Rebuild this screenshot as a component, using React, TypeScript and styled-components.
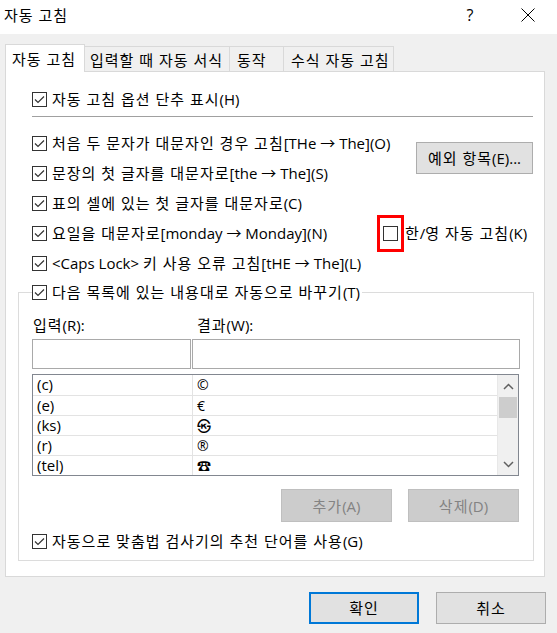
import React from "react";
import styled, { createGlobalStyle } from "styled-components";

const FONT = `"Open Sans", "Noto Sans CJK KR", "DejaVu Sans", sans-serif`;

const Global = createGlobalStyle`
  html, body { margin: 0; padding: 0; background: #f0f0f0; }
  body { font-family: ${FONT}; font-size: 15px; line-height: 20px; color: #000; }
  * { box-sizing: border-box; }
`;

const KoRun = styled.span`
  letter-spacing: 1px;
`;

const HANGUL = /([\u1100-\u11FF\u3130-\u318F\uAC00-\uD7AF][\u1100-\u11FF\u3130-\u318F\uAC00-\uD7AF ]*)/;

const T = ({ children }: { children: string }) => (
  <>
    {children.split(HANGUL).map((part, i) =>
      part === "" ? null : i % 2 === 1 ? <KoRun key={i}>{part}</KoRun> : <React.Fragment key={i}>{part}</React.Fragment>
    )}
  </>
);

const Window = styled.div`
  width: 557px;
  height: 633px;
  background: #f0f0f0;
  display: flex;
  flex-direction: column;
  overflow: hidden;
`;

const TitleBar = styled.div`
  height: 34px;
  flex-shrink: 0;
  background: #fff;
  display: flex;
  align-items: center;
  padding-left: 4px;
`;

const Title = styled.div`
  flex: 1;
  padding-bottom: 4px;
`;

const TitleButton = styled.div`
  width: 58px;
  height: 34px;
  display: flex;
  align-items: center;
  justify-content: center;
  padding-bottom: 4px;
  font-size: 16px;
`;

const Body = styled.div`
  padding-top: 10px;
  display: flex;
  flex-direction: column;
`;

const TabStrip = styled.div`
  display: flex;
  align-items: flex-end;
  height: 28px;
  margin: 0 0 -1px 5px;
  position: relative;
  z-index: 1;
`;

const Tab = styled.div<{ $active?: boolean; $w: number; $pad?: number }>`
  width: ${(p) => p.$w}px;
  height: ${(p) => (p.$active ? 28 : 26)}px;
  margin-left: ${(p) => (p.$active ? 0 : -1)}px;
  border: 1px solid #d9d9d9;
  border-bottom: ${(p) => (p.$active ? "none" : "1px solid #d9d9d9")};
  background: ${(p) => (p.$active ? "#fff" : "#f0f0f0")};
  display: flex;
  align-items: center;
  padding: ${(p) => (p.$active ? "0 0 0 6px" : `2px 0 0 ${p.$pad ?? 5}px`)};
  white-space: nowrap;
  position: relative;
  z-index: ${(p) => (p.$active ? 2 : 1)};
`;

const Panel = styled.div`
  margin: 0 12px 0 5px;
  background: #fff;
  border: 1px solid #d9d9d9;
  padding-top: 12px;
  display: flex;
  flex-direction: column;
`;

const CheckRow = styled.div<{ $indent?: number; $top?: number }>`
  display: flex;
  align-items: center;
  height: 30px;
  padding-left: ${(p) => p.$indent ?? 0}px;
  margin-top: ${(p) => p.$top ?? 0}px;
  white-space: nowrap;
`;

const Box = styled.span`
  width: 15px;
  height: 15px;
  flex-shrink: 0;
  border: 1px solid #333;
  background: #fff;
  display: flex;
  align-items: center;
  justify-content: center;
`;

const LabelText = styled.span<{ $gap?: number }>`
  margin-left: ${(p) => p.$gap ?? 5}px;
`;

const Separator = styled.div`
  height: 1px;
  background: #a0a0a0;
  margin: 2px 11px 11px 26px;
`;

const OptionsGrid = styled.div`
  display: grid;
  grid-template-columns: 345px 1fr;
  grid-auto-rows: 30px;
  padding: 0 11px 0 26px;
`;

const Cell = styled.div<{ $col: number; $row: string }>`
  grid-column: ${(p) => p.$col};
  grid-row: ${(p) => p.$row};
  display: flex;
  align-items: center;
  white-space: nowrap;
`;

const PushButton = styled.button<{ $w: number; $h: number; $default?: boolean; $disabled?: boolean }>`
  width: ${(p) => p.$w}px;
  height: ${(p) => p.$h}px;
  font-family: ${FONT};
  font-size: 15px;
  line-height: 20px;
  padding: 0;
  background: ${(p) => (p.$disabled ? "#cccccc" : "#e1e1e1")};
  color: ${(p) => (p.$disabled ? "#838383" : "#000")};
  border: ${(p) =>
    p.$default ? "2px solid #0078d7" : p.$disabled ? "1px solid #bfbfbf" : "1px solid #adadad"};
  display: flex;
  align-items: center;
  justify-content: center;
  white-space: nowrap;
`;

const ExceptionCell = styled.div`
  grid-column: 2;
  grid-row: 1 / 3;
  justify-self: end;
  align-self: center;
`;

const Highlight = styled.span`
  border: 3px solid #ff0000;
  padding: 8px 3px;
  margin: -5px 0;
  display: flex;
`;

const GroupBox = styled.fieldset`
  margin: 0 10px 15px 12px;
  border: 1px solid #dcdcdc;
  padding: 0 13px 4px 13px;
  min-width: 0;
`;

const Legend = styled.legend`
  padding: 0 2px 0 0;
  height: 28px;
  display: flex;
  align-items: center;
  white-space: nowrap;
  background: #fff;
`;

const TwoCols = styled.div`
  display: grid;
  grid-template-columns: 159px 1fr;
  column-gap: 1px;
`;

const FieldLabels = styled(TwoCols)`
  height: 26px;
  margin-top: 6px;
  align-items: center;
`;

const FieldLabel = styled.div<{ $pad: number }>`
  padding-left: ${(p) => p.$pad}px;
`;

const Inputs = styled(TwoCols)`
  margin-top: 1px;
`;

const TextInput = styled.input`
  height: 30px;
  border: 1px solid #a9a9a9;
  background: #fff;
  outline: none;
  font-family: ${FONT};
  font-size: 15px;
  padding: 0 4px;
  min-width: 0;
`;

const ListBox = styled.div`
  margin-top: 5px;
  height: 102px;
  border: 1px solid #828790;
  display: flex;
  margin-right: 1px;
`;

const ListRows = styled.div`
  flex: 1;
  display: flex;
  flex-direction: column;
`;

const ListRow = styled.div`
  height: 20px;
  display: grid;
  grid-template-columns: 160px 1fr;
  border-top: 1px solid #e3e3e3;
  &:first-child { border-top: none; }
`;

const ListCell = styled.div<{ $divider?: boolean; $symbol?: boolean }>`
  padding-left: 4px;
  line-height: 19px;
  border-right: ${(p) => (p.$divider ? "1px solid #e3e3e3" : "none")};
  white-space: nowrap;
  font-size: ${(p) => (p.$symbol ? 14 : 15)}px;
`;

const ScrollBar = styled.div`
  width: 21px;
  background: #f0f0f0;
  border-left: 1px solid #e8e8e8;
  display: flex;
  flex-direction: column;
`;

const ScrollArrow = styled.div<{ $h: number }>`
  height: ${(p) => p.$h}px;
  display: flex;
  align-items: center;
  justify-content: center;
`;

const ScrollThumb = styled.div`
  height: 21px;
  margin: 0 1px;
  background: #cdcdcd;
`;

const ScrollTrack = styled.div`
  flex: 1;
`;

const ActionRow = styled.div`
  margin-top: 13px;
  display: flex;
  justify-content: flex-end;
  gap: 16px;
  padding-right: 1px;
`;

const DialogButtons = styled.div`
  margin-top: 15px;
  display: flex;
  justify-content: flex-end;
  gap: 17px;
  padding-right: 11px;
`;

const Check = () => (
  <svg width="13" height="13" viewBox="0 0 13 13">
    <polyline points="2,6.5 5,9.5 11,3.5" fill="none" stroke="#333" strokeWidth="1.2" />
  </svg>
);

const CheckBox = ({ checked }: { checked: boolean }) => <Box>{checked && <Check />}</Box>;

const Chevron = ({ up }: { up?: boolean }) => (
  <svg width="11" height="7" viewBox="0 0 11 7">
    <polyline
      points={up ? "1,6 5.5,1.5 10,6" : "1,1 5.5,5.5 10,1"}
      fill="none"
      stroke="#606060"
      strokeWidth="1.5"
    />
  </svg>
);

const CloseIcon = () => (
  <svg width="14" height="14" viewBox="0 0 14 14">
    <path d="M0.5 0.5 L13.5 13.5 M13.5 0.5 L0.5 13.5" stroke="#000" strokeWidth="1" fill="none" />
  </svg>
);

const Option = ({ text, checked = true }: { text: string; checked?: boolean }) => (
  <>
    <CheckBox checked={checked} />
    <LabelText>
      <T>{text}</T>
    </LabelText>
  </>
);

const entries: [string, string][] = [
  ["(c)", "©"],
  ["(e)", "€"],
  ["(ks)", "㉿"],
  ["(r)", "®"],
  ["(tel)", "☎"],
];

export default function App() {
  return (
    <>
      <Global />
      <Window>
        <TitleBar>
          <Title>
            <T>자동 고침</T>
          </Title>
          <TitleButton>?</TitleButton>
          <TitleButton>
            <CloseIcon />
          </TitleButton>
        </TitleBar>
        <Body>
          <TabStrip>
            <Tab $active $w={80}>
              <T>자동 고침</T>
            </Tab>
            <Tab $w={146}>
              <T>입력할 때 자동 서식</T>
            </Tab>
            <Tab $w={55} $pad={7}>
              <T>동작</T>
            </Tab>
            <Tab $w={111} $pad={7}>
              <T>수식 자동 고침</T>
            </Tab>
          </TabStrip>
          <Panel>
            <CheckRow $indent={26}>
              <Option text="자동 고침 옵션 단추 표시(H)" />
            </CheckRow>
            <Separator />
            <OptionsGrid>
              <Cell $col={1} $row="1">
                <Option text="처음 두 문자가 대문자인 경우 고침[THe → The](O)" />
              </Cell>
              <ExceptionCell>
                <PushButton $w={117} $h={32}>
                  <T>예외 항목(E)...</T>
                </PushButton>
              </ExceptionCell>
              <Cell $col={1} $row="2">
                <Option text="문장의 첫 글자를 대문자로[the → The](S)" />
              </Cell>
              <Cell $col={1} $row="3">
                <Option text="표의 셀에 있는 첫 글자를 대문자로(C)" />
              </Cell>
              <Cell $col={1} $row="4">
                <Option text="요일을 대문자로[monday → Monday](N)" />
              </Cell>
              <Cell $col={2} $row="4">
                <Highlight>
                  <CheckBox checked={false} />
                </Highlight>
                <LabelText $gap={1}>
                  <T>한/영 자동 고침(K)</T>
                </LabelText>
              </Cell>
              <Cell $col={1} $row="5">
                <Option text="<Caps Lock> 키 사용 오류 고침[tHE → The](L)" />
              </Cell>
            </OptionsGrid>
            <GroupBox>
              <Legend>
                <Option text="다음 목록에 있는 내용대로 자동으로 바꾸기(T)" />
              </Legend>
              <FieldLabels>
                <FieldLabel $pad={1}>
                  <T>입력(R):</T>
                </FieldLabel>
                <FieldLabel $pad={5}>
                  <T>결과(W):</T>
                </FieldLabel>
              </FieldLabels>
              <Inputs>
                <TextInput />
                <TextInput />
              </Inputs>
              <ListBox>
                <ListRows>
                  {entries.map(([k, v]) => (
                    <ListRow key={k}>
                      <ListCell $divider>{k}</ListCell>
                      <ListCell $symbol>{v}</ListCell>
                    </ListRow>
                  ))}
                </ListRows>
                <ScrollBar>
                  <ScrollArrow $h={22}>
                    <Chevron up />
                  </ScrollArrow>
                  <ScrollThumb />
                  <ScrollTrack />
                  <ScrollArrow $h={21}>
                    <Chevron />
                  </ScrollArrow>
                </ScrollBar>
              </ListBox>
              <ActionRow>
                <PushButton $w={111} $h={33} $disabled>
                  <T>추가(A)</T>
                </PushButton>
                <PushButton $w={111} $h={33} $disabled>
                  <T>삭제(D)</T>
                </PushButton>
              </ActionRow>
              <CheckRow $top={4}>
                <Option text="자동으로 맞춤법 검사기의 추천 단어를 사용(G)" />
              </CheckRow>
            </GroupBox>
          </Panel>
          <DialogButtons>
            <PushButton $w={110} $h={32} $default>
              <T>확인</T>
            </PushButton>
            <PushButton $w={110} $h={32}>
              <T>취소</T>
            </PushButton>
          </DialogButtons>
        </Body>
      </Window>
    </>
  );
}
